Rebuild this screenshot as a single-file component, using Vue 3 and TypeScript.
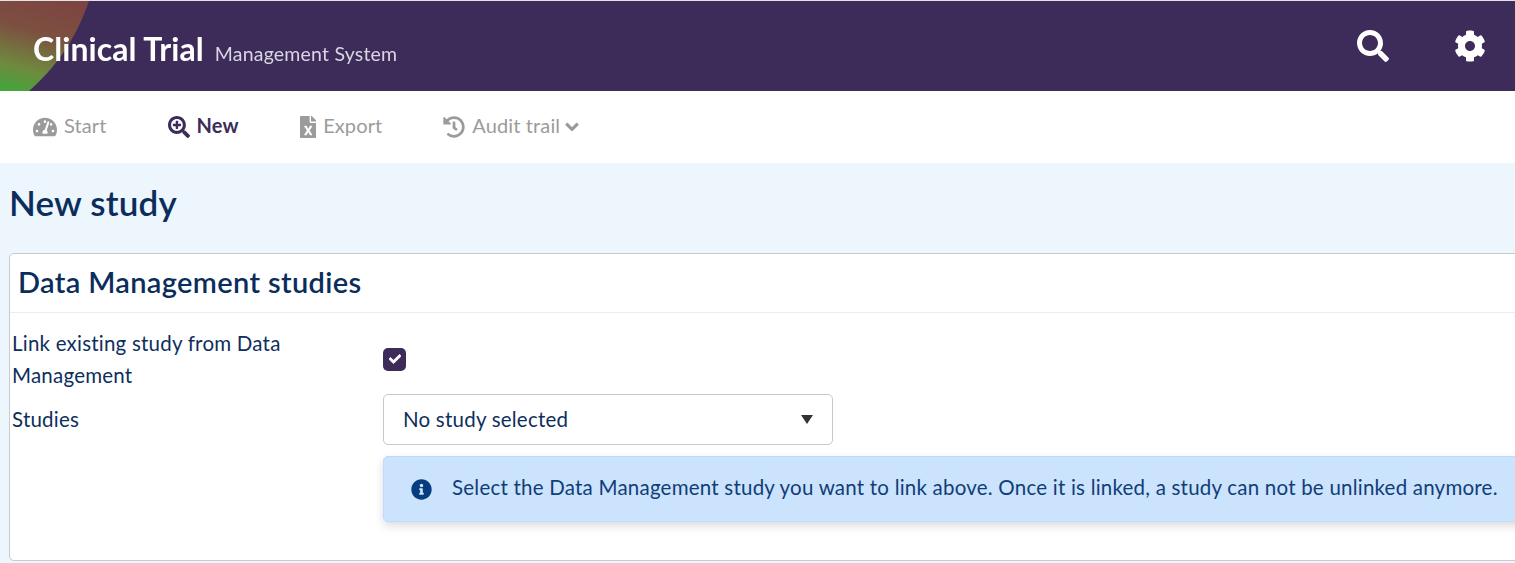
<script setup lang="ts">
interface NavItem {
  label: string
  viewBox: string
  path: string
  active?: boolean
  caret?: boolean
}

const chevron = 'M207.029 381.476L12.686 187.132c-9.373-9.373-9.373-24.569 0-33.941l22.667-22.667c9.357-9.357 24.522-9.375 33.901-.04L224 284.505l154.745-154.021c9.379-9.335 24.544-9.317 33.901.04l22.667 22.667c9.373 9.373 9.373 24.569 0 33.941L240.971 381.476c-9.373 9.372-24.569 9.372-33.942 0z'

const items: NavItem[] = [
  { label: 'Start', viewBox: '0 0 576 512', path: 'M288 32C128.94 32 0 160.94 0 320c0 52.8 14.25 102.26 39.06 144.8 5.61 9.62 16.3 15.2 27.44 15.2h443c11.14 0 21.83-5.58 27.44-15.2C561.75 422.26 576 372.8 576 320c0-159.06-128.94-288-288-288zm0 64c14.71 0 26.58 10.13 30.32 23.65-1.11 2.26-2.64 4.23-3.45 6.67l-9.22 27.67c-5.13 3.49-10.97 6.01-17.64 6.01-17.67 0-32-14.33-32-32S270.33 96 288 96zM96 384c-17.67 0-32-14.33-32-32s14.33-32 32-32 32 14.33 32 32-14.33 32-32 32zm48-160c-17.67 0-32-14.33-32-32s14.33-32 32-32 32 14.33 32 32-14.33 32-32 32zm246.77-72.41l-61.33 184C343.13 347.33 352 364.54 352 384c0 11.72-3.38 22.55-8.88 32H232.88c-5.5-9.45-8.88-20.28-8.88-32 0-33.94 26.5-61.43 59.9-63.59l61.34-184.01c4.17-12.56 17.73-19.45 30.36-15.17 12.57 4.19 19.35 17.79 15.17 30.36zm14.66 57.2l15.52-46.55c3.47-1.29 7.13-2.23 11.05-2.23 17.67 0 32 14.33 32 32s-14.33 32-32 32c-11.38-.01-20.89-6.28-26.57-15.22zM480 384c-17.67 0-32-14.33-32-32s14.33-32 32-32 32 14.33 32 32-14.33 32-32 32z' },
  { label: 'New', active: true, viewBox: '0 0 512 512', path: 'M304 192v32c0 6.6-5.4 12-12 12h-56v56c0 6.6-5.4 12-12 12h-32c-6.6 0-12-5.4-12-12v-56h-56c-6.6 0-12-5.4-12-12v-32c0-6.6 5.4-12 12-12h56v-56c0-6.6 5.4-12 12-12h32c6.6 0 12 5.4 12 12v56h56c6.6 0 12 5.4 12 12zm201 284.7L476.7 505c-9.4 9.4-24.6 9.4-33.9 0L343 405.3c-4.5-4.5-7-10.6-7-17V372c-35.3 27.6-79.7 44-128 44C93.1 416 0 322.9 0 208S93.1 0 208 0s208 93.1 208 208c0 48.3-16.4 92.7-44 128h16.3c6.4 0 12.5 2.5 17 7l99.7 99.7c9.3 9.4 9.3 24.6 0 34zM344 208c0-75.2-60.8-136-136-136S72 132.8 72 208s60.8 136 136 136 136-60.8 136-136z' },
  { label: 'Export', viewBox: '0 0 384 512', path: 'M224 136V0H24C10.7 0 0 10.7 0 24v464c0 13.3 10.7 24 24 24h336c13.3 0 24-10.7 24-24V160H248c-13.2 0-24-10.8-24-24zm60.1 106.5L224 336l60.1 93.5c5.1 8-.6 18.5-10.1 18.5h-34.9c-4.4 0-8.5-2.4-10.6-6.3C208.9 405.5 192 373 192 373c-6.4 14.8-10 20-36.6 68.8-2.1 3.9-6.1 6.3-10.5 6.3H110c-9.5 0-15.2-10.5-10.1-18.5l60.3-93.5-60.3-93.5c-5.2-8 .6-18.5 10.1-18.5h34.8c4.4 0 8.5 2.4 10.6 6.3 26.1 48.8 20 33.6 36.6 68.5 0 0 6.1-11.7 36.6-68.5 2.1-3.9 6.2-6.3 10.6-6.3H274c9.5-.1 15.2 10.4 10.1 18.4zM384 121.9v6.1H256V0h6.1c6.4 0 12.5 2.5 17 7l97.9 98c4.5 4.5 7 10.6 7 16.9z' },
  { label: 'Audit trail', caret: true, viewBox: '0 0 512 512', path: 'M504 255.531c.253 136.64-111.18 248.372-247.82 248.468-59.015.042-113.223-20.53-155.822-54.911-11.077-8.94-11.905-25.541-1.839-35.607l11.267-11.267c8.609-8.609 22.353-9.551 31.891-1.984C173.062 425.135 212.781 440 256 440c101.705 0 184-82.311 184-184 0-101.705-82.311-184-184-184-48.814 0-93.149 18.969-126.068 49.932l50.754 50.754c10.08 10.08 2.941 27.314-11.313 27.314H24c-8.837 0-16-7.163-16-16V38.627c0-14.254 17.234-21.393 27.314-11.314l49.372 49.372C129.209 34.136 189.552 8 256 8c136.81 0 247.747 110.78 248 247.531zm-180.912 78.784l9.823-12.63c8.138-10.463 6.253-25.542-4.21-33.679L288 256.349V152c0-13.255-10.745-24-24-24h-16c-13.255 0-24 10.745-24 24v135.651l65.409 50.874c10.463 8.137 25.541 6.253 33.679-4.21z' },
]
</script>

<template>
  <div class="page">
    <header class="header">
      <div class="brand">
        <span class="brand-main">Clinical Trial</span>
        <span class="brand-sub">Management System</span>
      </div>
      <div class="header-icons">
        <svg class="hicon" viewBox="0 0 512 512"><path fill="currentColor" d="M505 442.7L405.3 343c-4.5-4.5-10.6-7-17-7H372c27.6-35.3 44-79.7 44-128C416 93.1 322.9 0 208 0S0 93.1 0 208s93.1 208 208 208c48.3 0 92.7-16.4 128-44v16.3c0 6.4 2.5 12.5 7 17l99.7 99.7c9.4 9.4 24.6 9.4 33.9 0l28.3-28.3c9.4-9.4 9.4-24.6.1-34zM208 336c-70.7 0-128-57.2-128-128 0-70.7 57.2-128 128-128 70.7 0 128 57.2 128 128 0 70.7-57.2 128-128 128z" /></svg>
        <svg class="hicon" viewBox="0 0 512 512"><path fill="currentColor" d="M487.4 315.7l-42.6-24.6c4.3-23.2 4.3-47 0-70.2l42.6-24.6c4.9-2.8 7.1-8.6 5.5-14-11.1-35.6-30-67.8-54.7-94.6-3.8-4.1-10-5.1-14.8-2.3L380.8 110c-17.9-15.4-38.5-27.3-60.8-35.1V25.8c0-5.6-3.9-10.5-9.4-11.7-36.7-8.2-74.3-7.8-109.2 0-5.5 1.2-9.4 6.1-9.4 11.7V75c-22.2 7.9-42.8 19.8-60.8 35.1L88.7 85.5c-4.9-2.8-11-1.9-14.8 2.3-24.7 26.7-43.6 58.9-54.7 94.6-1.7 5.4.6 11.2 5.5 14L67.3 221c-4.3 23.2-4.3 47 0 70.2l-42.6 24.6c-4.9 2.8-7.1 8.6-5.5 14 11.1 35.6 30 67.8 54.7 94.6 3.8 4.1 10 5.1 14.8 2.3l42.6-24.6c17.9 15.4 38.5 27.3 60.8 35.1v49.2c0 5.6 3.9 10.5 9.4 11.7 36.7 8.2 74.3 7.8 109.2 0 5.5-1.2 9.4-6.1 9.4-11.7v-49.2c22.2-7.9 42.8-19.8 60.8-35.1l42.6 24.6c4.9 2.8 11 1.9 14.8-2.3 24.7-26.7 43.6-58.9 54.7-94.6 1.5-5.5-.7-11.3-5.6-14.1zM256 336c-44.1 0-80-35.9-80-80s35.9-80 80-80 80 35.9 80 80-35.9 80-80 80z" /></svg>
      </div>
    </header>

    <nav class="nav">
      <a v-for="item in items" :key="item.label" class="nav-item" :class="{ active: item.active }">
        <svg class="nav-icon" :viewBox="item.viewBox"><path fill="currentColor" :d="item.path" /></svg>
        <span class="nav-label">{{ item.label }}</span>
        <svg v-if="item.caret" class="caret" viewBox="0 0 448 512"><path fill="currentColor" stroke="currentColor" stroke-width="40" :d="chevron" /></svg>
      </a>
    </nav>

    <main class="content">
      <h1 class="title">New study</h1>
      <section class="card">
        <h2 class="card-title">Data Management studies</h2>
        <div class="card-body">
          <div class="row">
            <label class="label">Link existing study from Data Management</label>
            <div class="field field-check">
              <span class="checkbox">
                <svg viewBox="0 0 512 512"><path fill="currentColor" stroke="currentColor" stroke-width="30" d="M173.898 439.404l-166.4-166.4c-9.997-9.997-9.997-26.206 0-36.204l36.203-36.204c9.997-9.998 26.207-9.998 36.204 0L192 312.69 432.095 72.596c9.997-9.997 26.207-9.997 36.204 0l36.203 36.204c9.997 9.997 9.997 26.206 0 36.204l-294.4 294.401c-9.998 9.997-26.207 9.997-36.204-.001z" /></svg>
              </span>
            </div>
          </div>
          <div class="row">
            <label class="label label-studies">Studies</label>
            <div class="field">
              <div class="select">
                <span>No study selected</span>
                <span class="arrow"></span>
              </div>
              <div class="alert">
                <svg class="info" viewBox="0 0 512 512"><path fill="currentColor" d="M256 8C119.043 8 8 119.083 8 256c0 136.997 111.043 248 248 248s248-111.003 248-248C504 119.083 392.957 8 256 8zm0 110c23.196 0 42 18.804 42 42s-18.804 42-42 42-42-18.804-42-42 18.804-42 42-42zm56 254c0 6.627-5.373 12-12 12h-88c-6.627 0-12-5.373-12-12v-24c0-6.627 5.373-12 12-12h12v-64h-12c-6.627 0-12-5.373-12-12v-24c0-6.627 5.373-12 12-12h64c6.627 0 12 5.373 12 12v100h12c6.627 0 12 5.373 12 12v24z" /></svg>
                <span>Select the Data Management study you want to link above. Once it is linked, a study can not be unlinked anymore.</span>
              </div>
            </div>
          </div>
        </div>
      </section>
    </main>
  </div>
</template>

<style>
html, body {
  margin: 0;
  overflow: hidden;
  background: #edf5fd;
}
</style>

<style scoped>
.page {
  width: 1515px;
  height: 563px;
  overflow: hidden;
  font-family: Lato, "Open Sans", sans-serif;
  color: #0e2f5c;
  background: #edf5fd;
}
.header {
  height: 90px;
  border-top: 1px solid #e3e3e3;
  display: flex;
  justify-content: space-between;
  align-items: center;
  padding: 0 29px 0 33px;
  color: #fff;
  background: #3d2c59;
  position: relative;
  overflow: hidden;
}
.header::before {
  content: "";
  position: absolute;
  left: 0;
  top: 0;
  width: 92px;
  height: 90px;
  background: linear-gradient(195deg, #7d4242 0%, #7c5040 40%, #6f8a3e 75%, #3ea83c 100%);
  clip-path: path("M0 0 L89 0 C 76 38 56 66 29 90 L0 90 Z");
}
.brand {
  display: flex;
  align-items: baseline;
  gap: 11px;
  position: relative;
  margin-top: 4px;
  filter: blur(0.45px);
}
.brand-main {
  font-size: 32px;
  font-weight: 700;
  letter-spacing: 0.05px;
}
.brand-sub {
  font-size: 19.5px;
  font-weight: 400;
  letter-spacing: 0.2px;
  color: #d9d6e2;
}
.header-icons {
  display: flex;
  align-items: center;
  gap: 65px;
  margin-top: -1px;
}
.hicon {
  width: 32px;
  height: 32px;
}
.nav {
  height: 72px;
  background: #fff;
  display: flex;
  align-items: center;
  padding-left: 33px;
  gap: 61px;
}
.nav-item {
  display: flex;
  align-items: center;
  font-size: 20px;
  letter-spacing: 0.12px;
  color: #9b9b9b;
}
.nav-label {
  padding-bottom: 4px;
}
.nav-icon {
  height: 22px;
  width: auto;
  max-width: 24px;
  margin-right: 7px;
}
.nav-item.active {
  color: #3d2c59;
  font-weight: 700;
}
.caret {
  width: 14px;
  height: 14px;
  margin-left: 5px;
}
.content {
  padding: 0 0 0 9px;
}
.title {
  margin: 0;
  height: 90px;
  font-size: 35px;
  font-weight: 600;
  letter-spacing: 0.2px;
  line-height: 78px;
  color: #0a2d5c;
}
.card {
  width: 1600px;
  height: 308px;
  box-sizing: border-box;
  background: #fff;
  border: 1px solid #c9cacc;
  border-radius: 5px;
}
.card-title {
  margin: 0;
  height: 59px;
  box-sizing: border-box;
  padding-left: 8px;
  font-size: 29px;
  font-weight: 600;
  letter-spacing: 0.35px;
  line-height: 56px;
  color: #0a2d5c;
  border-bottom: 1px solid #ececec;
}
.card-body {
  padding-top: 14px;
}
.row {
  display: flex;
  padding-left: 2px;
  font-size: 20.5px;
  letter-spacing: 0.22px;
  line-height: 32px;
}
.label {
  width: 371px;
  flex: none;
  padding-right: 60px;
  box-sizing: border-box;
}
.label-studies {
  padding-top: 12px;
}
.field-check {
  display: flex;
  align-items: center;
  height: 64px;
}
.field {
  flex: 1;
}
.checkbox {
  width: 23px;
  height: 23px;
  border-radius: 5px;
  background: #3d2c59;
  color: #fff;
  display: flex;
  align-items: center;
  justify-content: center;
}
.checkbox svg {
  width: 12px;
  height: 12px;
}
.select {
  margin-top: 3px;
  width: 450px;
  height: 51px;
  box-sizing: border-box;
  border: 1px solid #c8c8c8;
  border-radius: 5px;
  display: flex;
  align-items: center;
  justify-content: space-between;
  padding: 0 19px 1px;
  background: #fff;
}
.arrow {
  width: 0;
  height: 0;
  margin-top: 1px;
  border-left: 6px solid transparent;
  border-right: 6px solid transparent;
  border-top: 9px solid #333;
}
.alert {
  margin-top: 11px;
  height: 66px;
  box-sizing: border-box;
  display: flex;
  align-items: center;
  padding-left: 27px;
  background: #cbe3fc;
  border: 1px solid #bcdcfb;
  border-radius: 5px;
  box-shadow: 0 4px 10px rgba(0, 0, 0, 0.14);
  color: #113d78;
  white-space: nowrap;
}
.alert span {
  padding-bottom: 5px;
}
.info {
  width: 21px;
  height: 21px;
  margin-right: 20px;
  color: #063d7e;
  flex: none;
}
</style>
